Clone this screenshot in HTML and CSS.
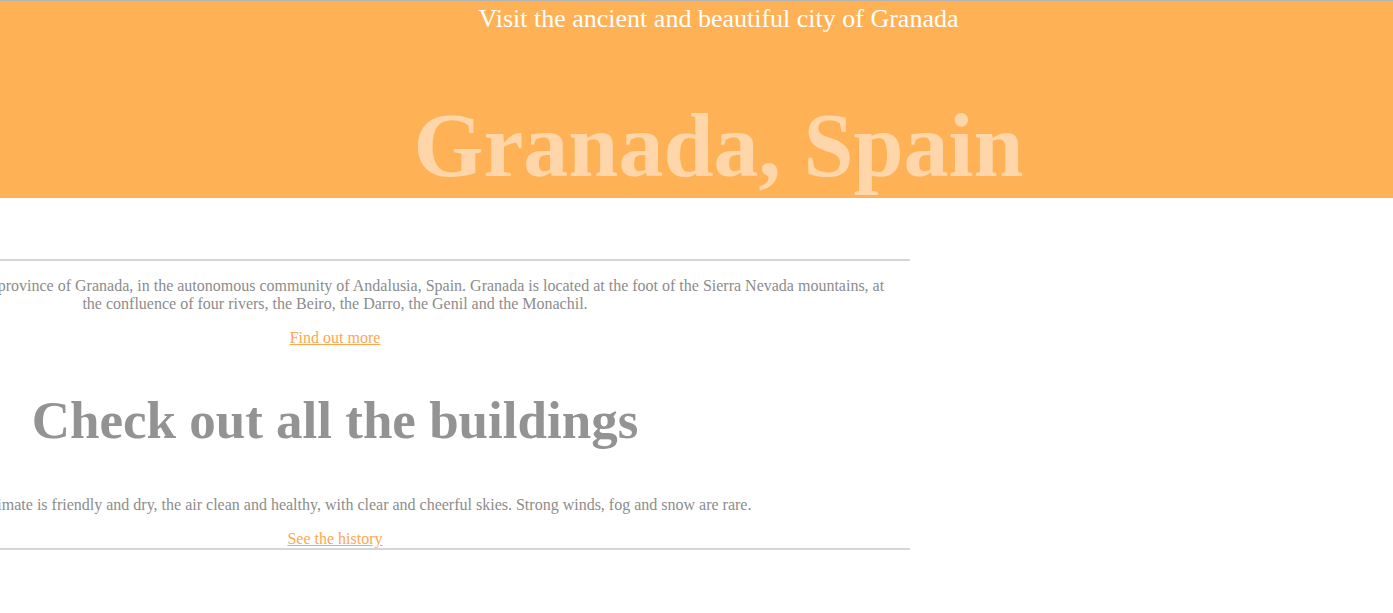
FILE: index.html
```html
<!DOCTYPE html>
<html lang="en">
<head>
<meta charset="utf-8">
<title>Granada, Spain</title>
<link rel="stylesheet" href="styles.css">
</head>
<body>
<header class="hero">
  <p class="hero-sub">Visit the ancient and beautiful city of Granada</p>
  <h1 class="hero-title">Granada, Spain</h1>
</header>
<main class="content">
  <p class="text intro">Granada is the capital city of the province of Granada, in the autonomous community of Andalusia, Spain. Granada is located at the foot of the Sierra Nevada mountains, at the confluence of four rivers, the Beiro, the Darro, the Genil and the Monachil.</p>
  <p class="text more"><a class="link" href="#">Find out more</a></p>
  <h2 class="section-title">Check out all the buildings</h2>
  <p class="text climate">Granada's climate is friendly and dry, the air clean and healthy, with clear and cheerful skies. Strong winds, fog and snow are rare.</p>
  <p class="text last"><a class="link" href="#">See the history</a></p>
</main>
</body>
</html>
```
FILE: styles.css
```css
html, body {
  margin: 0;
  padding: 0;
  background: #ffffff;
  font-family: "Liberation Serif", "Times New Roman", serif;
  overflow: hidden;
}

.hero {
  background: #ffb255;
  border-top: 1px solid #b4b4b4;
  height: 197px;
  padding-left: 44px;
  text-align: center;
  display: flex;
  flex-direction: column;
  align-items: center;
}

.hero-sub {
  margin: 0;
  padding-top: 3px;
  font-size: 26px;
  line-height: 30px;
  color: #ffffff;
}

.hero-title {
  margin: 60px 0 0;
  font-size: 90px;
  font-weight: bold;
  line-height: 103px;
  color: #ffd6a9;
}

.content {
  box-sizing: border-box;
  margin: 61px 0 0 -240px;
  width: 1150px;
  padding: 0 22px;
  border-top: 2px solid #d6d6d6;
  border-bottom: 2px solid #d6d6d6;
  text-align: center;
}

.text {
  margin: 16px 0;
  font-size: 16px;
  line-height: 18px;
  color: #8c8c8c;
}

.intro {
  margin-top: 16px;
}

.more {
  margin-bottom: 0;
}

.section-title {
  margin: 43px 0 45px;
  font-size: 53px;
  font-weight: bold;
  line-height: 61px;
  color: #939393;
}

.climate {
  margin-top: 0;
}

.last {
  margin-top: 15px;
  margin-bottom: 0;
}

.link {
  color: #ffa650;
  text-decoration: underline;
}
```
